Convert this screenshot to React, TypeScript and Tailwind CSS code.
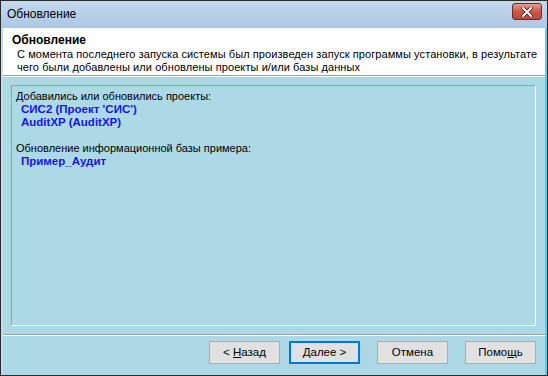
import React from 'react';

const font = { fontFamily: '"Liberation Sans", "DejaVu Sans", sans-serif' };

const Btn: React.FC<{ children: React.ReactNode; primary?: boolean; className?: string }> = ({ children, primary, className }) => (
  <button
    className={
      'w-[71px] h-[23px] bg-[#e1e1e1] text-[11.5px] text-black flex items-center justify-center whitespace-pre ' +
      (primary ? 'border-2 border-[#0078d7] ' : 'border border-[#adadad] ') +
      (className || '')
    }
  >
    {children}
  </button>
);

export default function App() {
  return (
    <div className="w-[548px] h-[376px] bg-white" style={font}>
      <div className="w-[548px] h-[376px] border border-[#2b2b2b] flex flex-col bg-[#add8e6] overflow-hidden">
        {/* Title bar */}
        <div className="h-[27px] shrink-0 flex items-center justify-between pl-[6px] pr-[5px] bg-gradient-to-b from-[#c4d9ef] to-[#abc7e5]">
          <span className="text-[12px] text-black -mt-[1px]">Обновление</span>
          <div className="w-[30px] h-[17px] -mt-[6px] rounded-[3px] border border-[#6b2a2a] bg-gradient-to-b from-[#e0a092] via-[#c75a4a] to-[#c0473a] flex items-center justify-center">
            <svg width="12" height="10" viewBox="0 0 12 10">
              <path d="M2 1 L10 9 M10 1 L2 9" stroke="#4a1a1a" strokeWidth="3.6" strokeLinecap="square" />
              <path d="M2 1 L10 9 M10 1 L2 9" stroke="#ffffff" strokeWidth="2" strokeLinecap="square" />
            </svg>
          </div>
        </div>

        {/* Body */}
        <div className="flex-1 flex flex-col border-l-2 border-r-2 border-b border-l-[#c9dcef] border-r-[#5fcdee] border-b-[#2fc6f0]">
          {/* Header */}
          <div className="h-[48px] shrink-0 bg-white border-b border-[#a0a0a0] pl-[9px] pt-[5px] text-black whitespace-nowrap">
            <div className="text-[12px] font-bold leading-[14px]">Обновление</div>
            <div className="pl-[5px] text-[11px] leading-[13px] mt-[1px] tracking-[0.08px]">
              <div>С момента последнего запуска системы был произведен запуск программы установки, в результате</div>
              <div>чего были добавлены или обновлены проекты и/или базы данных</div>
            </div>
          </div>
          <div className="h-px bg-white shrink-0" />

          {/* Content */}
          <div className="flex-1 flex flex-col pt-[8px] pl-[8px] pr-[9px]">
            <div className="h-[241px] border-t border-l border-[#a0a0a0] border-r-white border-b-white border-r border-b pl-[4px] pt-[4px] text-[11px] leading-[13px] text-black whitespace-nowrap">
              <div>Добавились или обновились проекты:</div>
              <div className="pl-[5px] font-bold text-[11.5px] text-[#1414e6]">СИС2 (Проект 'СИС')</div>
              <div className="pl-[5px] font-bold text-[11.5px] text-[#1414e6]">AuditXP (AuditXP)</div>
              <div className="h-[13px]" />
              <div>Обновление информационной базы примера:</div>
              <div className="pl-[5px] font-bold text-[11.5px] text-[#1414e6]">Пример_Аудит</div>
            </div>
          </div>

          {/* Separator */}
          <div className="h-px bg-[#a0a0a0] mt-[8px] shrink-0" />
          <div className="h-px bg-white shrink-0" />

          {/* Buttons */}
          <div className="flex justify-end items-start pt-[5px] pr-[9px] h-[39px] shrink-0">
            <Btn>
              {'< '}
              <span className="underline">Н</span>азад
            </Btn>
            <Btn primary className="ml-[9px]">
              <span className="underline">Д</span>
              {'алее >'}
            </Btn>
            <Btn className="ml-[17px]">Отмена</Btn>
            <Btn className="ml-[17px]">
              Помо<span className="underline">щ</span>ь
            </Btn>
          </div>
        </div>
      </div>
    </div>
  );
}
